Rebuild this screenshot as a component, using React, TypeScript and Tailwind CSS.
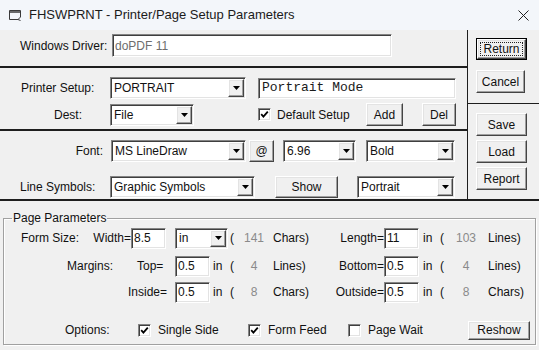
import React from "react";

const SUNKEN =
  "border border-t-[#848484] border-l-[#848484] border-b-white border-r-white shadow-[inset_1px_1px_0_#3f3f3f,inset_-1px_-1px_0_#e3e3e3]";
const RAISED =
  "border border-t-white border-l-white border-b-[#444444] border-r-[#444444] shadow-[inset_-1px_-1px_0_#a0a0a0,inset_1px_1px_0_#e3e3e3]";

function Arrow() {
  return (
    <svg width="7" height="4" viewBox="0 0 7 4">
      <path d="M0 0H7L3.5 4Z" fill="#000" />
    </svg>
  );
}

function Combo({ cls, text }: { cls: string; text: string }) {
  return (
    <div className={`flex shrink-0 bg-white ${SUNKEN} ${cls}`}>
      <div className="flex flex-1 items-center overflow-hidden whitespace-nowrap pl-[3px] text-[12px] leading-[14px]">
        {text}
      </div>
      <div
        className={`my-[1px] mr-[1px] flex w-[16px] items-center justify-center bg-[#f0f0f0] ${RAISED}`}
      >
        <Arrow />
      </div>
    </div>
  );
}

function TextBox({
  cls,
  children,
}: {
  cls: string;
  children: React.ReactNode;
}) {
  return (
    <div
      className={`flex shrink-0 items-center overflow-hidden whitespace-nowrap bg-white pl-[2px] ${SUNKEN} ${cls}`}
    >
      {children}
    </div>
  );
}

function Btn({ cls, children }: { cls: string; children: React.ReactNode }) {
  return (
    <div
      role="button"
      className={`flex shrink-0 items-center justify-center bg-[#f0f0f0] text-[12px] leading-[14px] text-[#111] ${RAISED} ${cls}`}
    >
      {children}
    </div>
  );
}

function Check({ checked }: { checked: boolean }) {
  return (
    <div
      className={`flex h-[13px] w-[13px] shrink-0 items-center justify-center bg-white ${SUNKEN}`}
    >
      {checked && (
        <svg width="9" height="9" viewBox="0 0 9 9">
          <path
            d="M1.2 4.2L3.4 6.6L7.8 1.6"
            stroke="#000"
            strokeWidth="1.8"
            fill="none"
          />
        </svg>
      )}
    </div>
  );
}

const GREY = "text-[#8a8a8a]";

export default function App() {
  return (
    <div className="flex h-[350px] w-[539px] flex-col overflow-hidden bg-[#f0f0f0] font-['Liberation_Sans',Arial,sans-serif] text-[12px] leading-[14px] text-[#111]">
      {/* Title bar */}
      <div className="flex h-[30px] shrink-0 items-center bg-[#f3f6fa]">
        <svg
          className="ml-[8px] shrink-0"
          width="14"
          height="12"
          viewBox="0 0 14 12"
          fill="none"
          stroke="#3a3a3a"
          strokeWidth="1"
        >
          <path d="M1.5 1.5H12.5V8L10 10.5H1.5Z" />
          <path d="M1.5 3H12.5" strokeWidth="1.5" />
          <path d="M10 10.5L12.5 11.5" />
        </svg>
        <span className="ml-[7px] text-[13px] leading-[16px] text-[#1b1b1b]">
          FHSWPRNT - Printer/Page Setup Parameters
        </span>
        <svg
          className="ml-auto mr-[10px] shrink-0"
          width="11"
          height="11"
          viewBox="0 0 11 11"
          stroke="#222"
          strokeWidth="1"
        >
          <path d="M0.5 0.5L10.5 10.5M10.5 0.5L0.5 10.5" />
        </svg>
      </div>

      {/* Upper area */}
      <div className="flex h-[171px] shrink-0 border-b-2 border-[#1e1e1e]">
        {/* Left panel */}
        <div className="flex w-[468px] shrink-0 flex-col border-r border-[#1e1e1e]">
          {/* Section 1 */}
          <div className="h-[38px] shrink-0 border-b-2 border-[#1e1e1e] pt-[4px]">
            <div className="flex h-[23px] items-center">
              <div className="w-[112px] shrink-0 whitespace-nowrap pl-[20px]">
                Windows Driver:
              </div>
              <TextBox cls="w-[280px] h-[23px]">
                <span className="text-[#6d6d6d]">doPDF 11</span>
              </TextBox>
            </div>
          </div>

          {/* Section 2 */}
          <div className="h-[63px] shrink-0 border-b-2 border-[#1e1e1e] pt-[9px]">
            <div className="flex h-[22px] items-center">
              <div className="w-[110px] shrink-0 whitespace-nowrap pl-[21px]">
                Printer Setup:
              </div>
              <Combo cls="w-[136px] h-[22px]" text="PORTRAIT" />
              <div className="w-[12px] shrink-0" />
              <TextBox cls="w-[198px] h-[21px]">
                <span className="pl-[1px] font-['Liberation_Mono',monospace] text-[13px] text-[#1a1a1a]">
                  Portrait Mode
                </span>
              </TextBox>
            </div>
            <div className="mt-[4px] flex h-[23px] items-center">
              <div className="w-[110px] shrink-0 pr-[28px] text-right">
                Dest:
              </div>
              <Combo cls="w-[84px] h-[22px]" text="File" />
              <div className="w-[64px] shrink-0" />
              <Check checked />
              <div className="w-[95px] shrink-0 whitespace-nowrap pl-[6px]">
                Default Setup
              </div>
              <Btn cls="w-[37px] h-[23px]">Add</Btn>
              <div className="w-[19px] shrink-0" />
              <Btn cls="w-[34px] h-[23px]">Del</Btn>
            </div>
          </div>

          {/* Section 3 */}
          <div className="flex-1 pt-[9px]">
            <div className="flex h-[22px] items-center">
              <div className="w-[111px] shrink-0 pr-[8px] text-right">
                Font:
              </div>
              <Combo cls="w-[135px] h-[22px]" text="MS LineDraw" />
              <div className="w-[3px] shrink-0" />
              <Btn cls="w-[25px] h-[22px]">@</Btn>
              <div className="w-[9px] shrink-0" />
              <Combo cls="w-[73px] h-[22px]" text="6.96" />
              <div className="w-[10px] shrink-0" />
              <Combo cls="w-[89px] h-[22px]" text="Bold" />
            </div>
            <div className="mt-[14px] flex h-[22px] items-center">
              <div className="w-[110px] shrink-0 whitespace-nowrap pl-[20px]">
                Line Symbols:
              </div>
              <Combo cls="w-[145px] h-[22px]" text="Graphic Symbols" />
              <div className="w-[20px] shrink-0" />
              <Btn cls="w-[63px] h-[22px]">Show</Btn>
              <div className="w-[19px] shrink-0" />
              <Combo cls="w-[98px] h-[22px]" text="Portrait" />
            </div>
          </div>
        </div>

        {/* Right panel */}
        <div className="flex flex-1 flex-col">
          <div className="h-[74px] shrink-0 border-b border-[#1e1e1e] pt-[8px]">
            <div className="ml-[8px] flex h-[22px] w-[51px] border border-black">
              <div
                role="button"
                className={`flex flex-1 bg-[#f0f0f0] p-[2px] ${RAISED}`}
              >
                <span className="flex flex-1 items-center justify-center self-stretch border border-dotted border-[#222]">
                  Return
                </span>
              </div>
            </div>
            <div className="ml-[8px] mt-[10px]">
              <Btn cls="w-[49px] h-[23px]">Cancel</Btn>
            </div>
          </div>
          <div className="flex flex-col pl-[8px] pt-[9px]">
            <Btn cls="w-[51px] h-[23px]">Save</Btn>
            <div className="h-[4px]" />
            <Btn cls="w-[51px] h-[23px]">Load</Btn>
            <div className="h-[4px]" />
            <Btn cls="w-[51px] h-[23px]">Report</Btn>
          </div>
        </div>
      </div>

      {/* Page Parameters group */}
      <fieldset className="mx-[3px] mt-[10px] border border-[#a0a0a0] p-0 pb-[4px] shadow-[inset_1px_1px_0_#ffffff,1px_1px_0_#ffffff]">
        <legend className="ml-[8px] px-[1px] text-[12px] leading-[14px]">
          Page Parameters
        </legend>

        {/* Row 1 */}
        <div className="mt-[2px] flex h-[22px] items-center whitespace-nowrap">
          <div className="w-[86px] shrink-0 pl-[17px]">Form Size:</div>
          <div className="w-[41px] shrink-0 text-right">Width=</div>
          <TextBox cls="w-[35px] h-[21px]">8.5</TextBox>
          <div className="w-[9px] shrink-0" />
          <Combo cls="w-[53px] h-[21px]" text="in" />
          <div className="w-[14px] shrink-0 pl-[2px]">(</div>
          <div className={`w-[24px] shrink-0 text-center ${GREY}`}>141</div>
          <div className="w-[62px] shrink-0 pl-[7px]">Chars)</div>
          <div className="w-[56px] shrink-0 text-right">Length=</div>
          <TextBox cls="w-[35px] h-[21px]">11</TextBox>
          <div className="w-[21px] shrink-0 pl-[4px]">in</div>
          <div className="w-[14px] shrink-0">(</div>
          <div className={`w-[24px] shrink-0 text-center ${GREY}`}>103</div>
          <div className="shrink-0 pl-[10px]">Lines)</div>
        </div>

        {/* Row 2 */}
        <div className="mt-[6px] flex h-[22px] items-center whitespace-nowrap">
          <div className="w-[133px] shrink-0 pl-[63px]">Margins:</div>
          <div className="w-[38px] shrink-0">Top=</div>
          <TextBox cls="w-[35px] h-[21px]">0.5</TextBox>
          <div className="w-[18px] shrink-0 pl-[3px]">in</div>
          <div className="w-[14px] shrink-0 pl-[2px]">(</div>
          <div className={`w-[24px] shrink-0 text-center ${GREY}`}>4</div>
          <div className="w-[62px] shrink-0 pl-[7px]">Lines)</div>
          <div className="w-[56px] shrink-0 text-right">Bottom=</div>
          <TextBox cls="w-[35px] h-[21px]">0.5</TextBox>
          <div className="w-[21px] shrink-0 pl-[4px]">in</div>
          <div className="w-[14px] shrink-0">(</div>
          <div className={`w-[24px] shrink-0 text-center ${GREY}`}>4</div>
          <div className="shrink-0 pl-[10px]">Lines)</div>
        </div>

        {/* Row 3 */}
        <div className="mt-[4px] flex h-[22px] items-center whitespace-nowrap">
          <div className="w-[171px] shrink-0 pl-[124px]">Inside=</div>
          <TextBox cls="w-[35px] h-[21px]">0.5</TextBox>
          <div className="w-[18px] shrink-0 pl-[3px]">in</div>
          <div className="w-[14px] shrink-0 pl-[2px]">(</div>
          <div className={`w-[24px] shrink-0 text-center ${GREY}`}>8</div>
          <div className="w-[62px] shrink-0 pl-[7px]">Chars)</div>
          <div className="w-[56px] shrink-0 text-right">Outside=</div>
          <TextBox cls="w-[35px] h-[21px]">0.5</TextBox>
          <div className="w-[21px] shrink-0 pl-[4px]">in</div>
          <div className="w-[14px] shrink-0">(</div>
          <div className={`w-[24px] shrink-0 text-center ${GREY}`}>8</div>
          <div className="shrink-0 pl-[10px]">Chars)</div>
        </div>

        {/* Row 4 */}
        <div className="mt-[17px] flex h-[20px] items-center whitespace-nowrap">
          <div className="w-[134px] shrink-0 pl-[61px]">Options:</div>
          <Check checked />
          <div className="w-[97px] shrink-0 pl-[7px]">Single Side</div>
          <Check checked />
          <div className="w-[87px] shrink-0 pl-[7px]">Form Feed</div>
          <Check checked={false} />
          <div className="w-[107px] shrink-0 pl-[7px]">Page Wait</div>
          <Btn cls="w-[62px] h-[19px]">Reshow</Btn>
        </div>
      </fieldset>
    </div>
  );
}
